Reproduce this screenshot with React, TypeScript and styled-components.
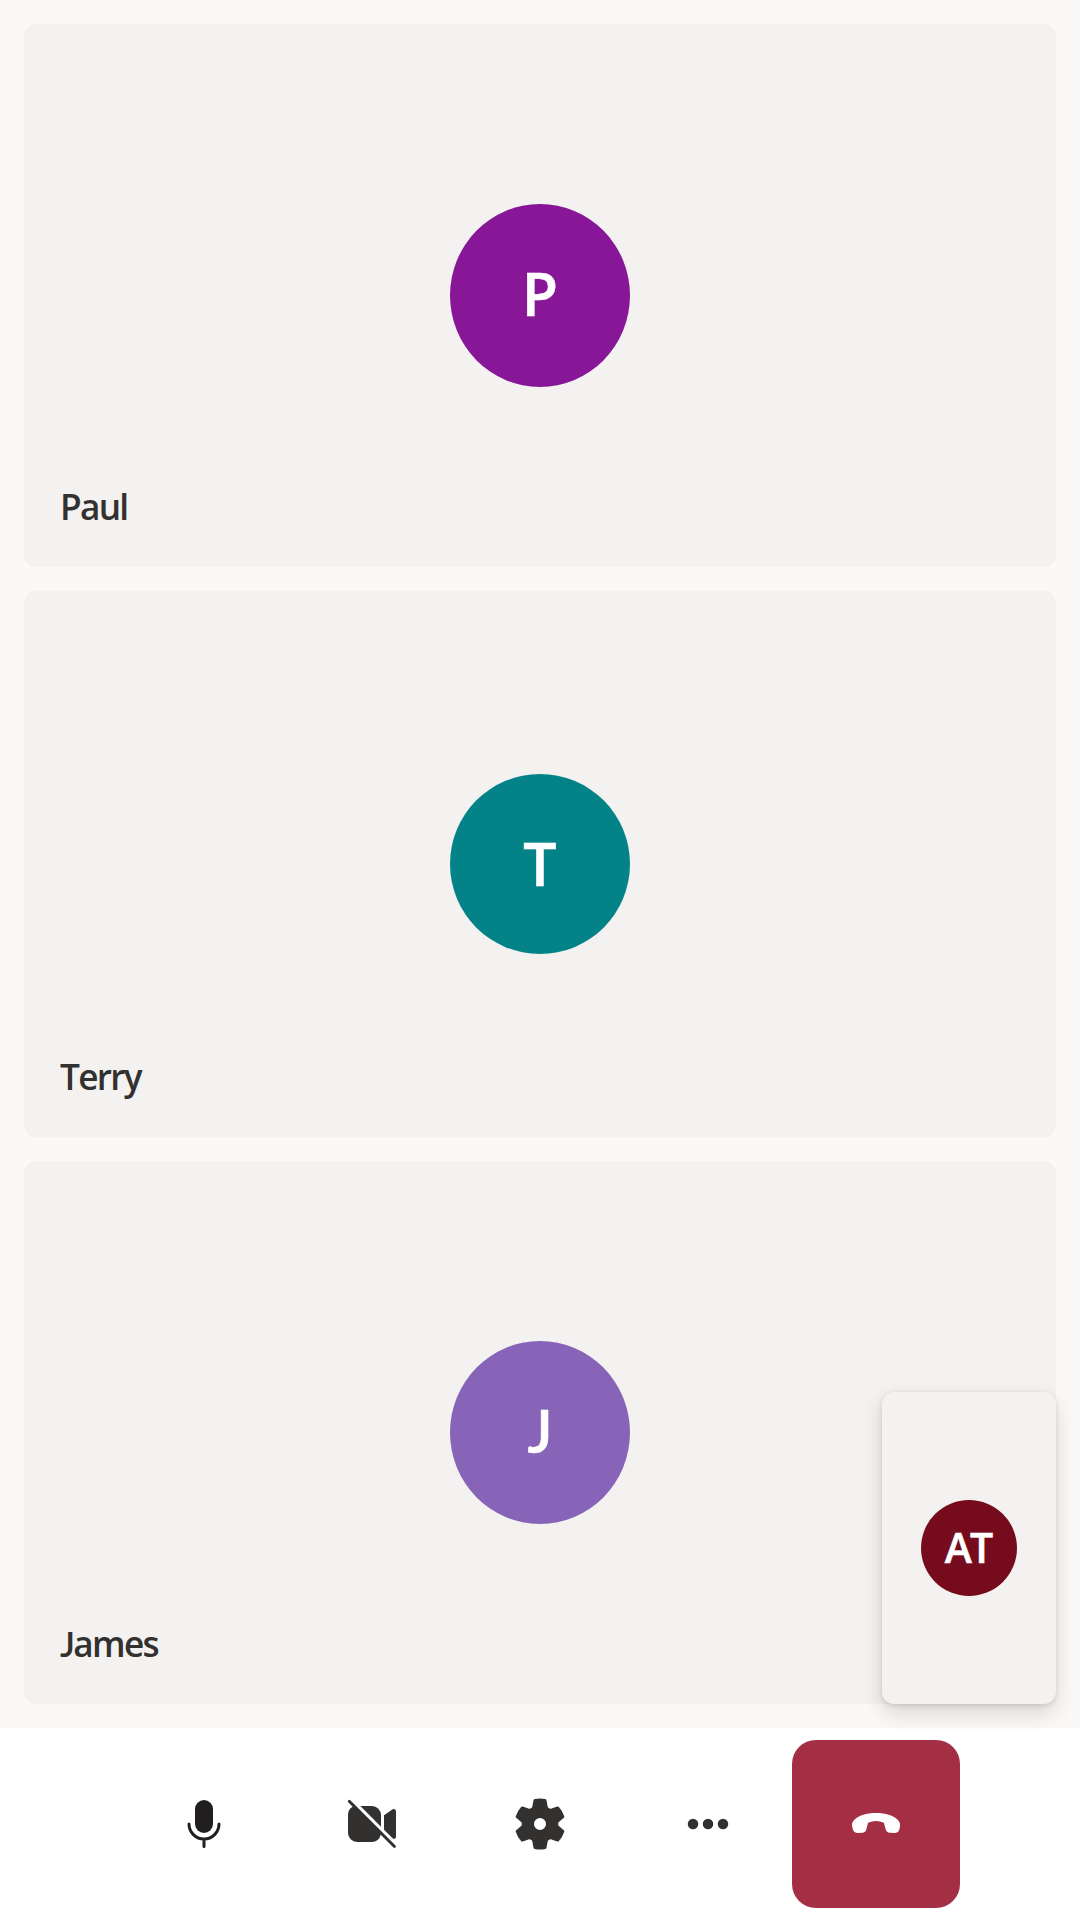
import React from "react";
import styled, { createGlobalStyle } from "styled-components";

const GlobalStyle = createGlobalStyle`
  * { box-sizing: border-box; }
  body {
    margin: 0;
    background: #fff;
    font-family: "Segoe UI", "Open Sans", "Noto Sans", sans-serif;
    font-weight: 600;
    color: #323130;
  }
`;

const Screen = styled.div`
  display: flex;
  flex-direction: column;
  width: 1080px;
  height: 1920px;
  background: #fff;
`;

const Gallery = styled.main`
  position: relative;
  display: grid;
  grid-template-rows: 543px 546px 543px;
  gap: 24px;
  height: 1728px;
  padding: 24px;
  background: #faf9f8;
`;

const Tile = styled.section`
  display: grid;
  grid-template: 100% / 100%;
  border-radius: 12px;
  background: #f3f2f1;
`;

const Avatar = styled.div<{ $color: string; $height: number }>`
  grid-area: 1 / 1;
  place-self: center;
  display: flex;
  align-items: center;
  justify-content: center;
  width: 180px;
  height: ${(p) => p.$height}px;
  border-radius: 50%;
  background: ${(p) => p.$color};
  color: #fff;
`;

/* Lato's capital J sits on the baseline instead of dropping below it. */
const HOOK_FONT = '"Segoe UI", Lato, sans-serif';

const Initial = styled.span<{ $size: number; $hook?: boolean; $tracking?: number; $lift?: number }>`
  font-size: ${(p) => p.$size}px;
  line-height: 1;
  letter-spacing: ${(p) => p.$tracking ?? 0}px;
  padding-bottom: ${(p) => p.$lift ?? 0}px;
  -webkit-text-stroke: 0.5px currentColor;
  ${(p) => p.$hook && `font-family: ${HOOK_FONT};`}
`;

const Name = styled.span<{ $hook?: boolean }>`
  grid-area: 1 / 1;
  place-self: end start;
  padding: 0 0 37.5px 36px;
  font-size: 35.2px;
  line-height: 48px;
  letter-spacing: -1.7px;
  ${(p) => p.$hook && `&::first-letter { font-family: ${HOOK_FONT}; }`}
`;

const SelfView = styled.aside`
  position: absolute;
  right: 24px;
  bottom: 24px;
  display: flex;
  align-items: center;
  justify-content: center;
  width: 174px;
  height: 312px;
  border-radius: 12px;
  background: #f3f2f1;
  box-shadow: 0 9.6px 21.6px rgba(0, 0, 0, 0.132), 0 1.8px 5.4px rgba(0, 0, 0, 0.108);
`;

const SelfAvatar = styled.div`
  display: flex;
  align-items: center;
  justify-content: center;
  width: 96px;
  height: 96px;
  padding-right: 2px;
  border-radius: 50%;
  background: #750b1c;
  color: #fff;
`;

const ControlBar = styled.footer`
  display: flex;
  height: 192px;
  padding: 12px 120px;
`;

const ControlButton = styled.button<{ $danger?: boolean }>`
  display: flex;
  align-items: center;
  justify-content: center;
  width: 168px;
  height: 168px;
  padding: 0;
  border: 0;
  border-radius: 24px;
  background: ${(p) => (p.$danger ? "#a42e43" : "transparent")};
  color: ${(p) => (p.$danger ? "#fff" : "#323130")};
`;

const Icon = styled.svg.attrs({ viewBox: "0 0 20 20", fill: "currentColor" })`
  width: 60px;
  height: 60px;
`;

const people = [
  { name: "Paul", color: "#881798", height: 183, lift: 5, hook: false },
  { name: "Terry", color: "#038387", height: 180, lift: 2, hook: false },
  { name: "James", color: "#8764b8", height: 183, lift: 4, hook: true },
];

export default function App() {
  return (
    <Screen>
      <GlobalStyle />
      <Gallery>
        {people.map((p) => (
          <Tile key={p.name}>
            <Avatar $color={p.color} $height={p.height}>
              <Initial $size={59} $hook={p.hook} $lift={p.lift}>{p.name[0]}</Initial>
            </Avatar>
            <Name $hook={p.hook}>{p.name}</Name>
          </Tile>
        ))}
        <SelfView>
          <SelfAvatar>
            <Initial $size={41} $tracking={-2} $lift={1}>AT</Initial>
          </SelfAvatar>
        </SelfView>
      </Gallery>
      <ControlBar>
        <ControlButton aria-label="Mute">
          <Icon color="#201f1e">
            <rect x="7" y="2" width="6" height="11" rx="3" />
            <path d="M5 10a5 5 0 0 0 10 0M10 15v2.5" fill="none" stroke="currentColor" strokeLinecap="round" />
          </Icon>
        </ControlButton>
        <ControlButton aria-label="Turn camera on">
          <Icon>
            <path d="M2.85 2.15a.5.5 0 1 0-.7.7l1.4 1.4A3 3 0 0 0 2 7v6a3 3 0 0 0 3 3h5a3 3 0 0 0 2.91-2.38l4.24 4.23a.5.5 0 0 0 .7-.7l-15-15Z" />
            <path d="M6.12 4 13 10.88V7a3 3 0 0 0-3-3H6.12Z" />
            <path d="M14 11.88l2.97 2.97A.75.75 0 0 0 18 14.3V5.75a.75.75 0 0 0-1.23-.58L14 7.1v4.78Z" />
          </Icon>
        </ControlButton>
        <ControlButton aria-label="Devices">
          <Icon>
            <path d="M1.91 7.38A8.5 8.5 0 0 1 3.69 4.3a.5.5 0 0 1 .54-.13l1.92.68a1 1 0 0 0 1.32-.76l.36-2a.5.5 0 0 1 .4-.4 8.53 8.53 0 0 1 3.55 0c.2.04.35.2.38.4l.37 2a1 1 0 0 0 1.32.76l1.92-.68a.5.5 0 0 1 .54.13 8.5 8.5 0 0 1 1.78 3.08c.06.2 0 .4-.15.54l-1.56 1.32a1 1 0 0 0 0 1.52l1.56 1.32a.5.5 0 0 1 .15.54 8.5 8.5 0 0 1-1.78 3.08.5.5 0 0 1-.54.13l-1.92-.68a1 1 0 0 0-1.32.76l-.37 2a.5.5 0 0 1-.38.4 8.53 8.53 0 0 1-3.56 0 .5.5 0 0 1-.39-.4l-.36-2a1 1 0 0 0-1.32-.76l-1.92.68a.5.5 0 0 1-.54-.13 8.5 8.5 0 0 1-1.78-3.08.5.5 0 0 1 .15-.54l1.56-1.32a1 1 0 0 0 0-1.52L2.06 7.92a.5.5 0 0 1-.15-.54ZM8 10a2 2 0 1 0 4 0 2 2 0 0 0-4 0Z" />
          </Icon>
        </ControlButton>
        <ControlButton aria-label="More">
          <Icon>
            <circle cx="5" cy="10" r="1.75" />
            <circle cx="10" cy="10" r="1.75" />
            <circle cx="15" cy="10" r="1.75" />
          </Icon>
        </ControlButton>
        <ControlButton $danger aria-label="Leave">
          <Icon>
            <path d="M17.96 10.94l-.16.83c-.15.78-.73 1.28-1.56 1.2l-1.63-.06c-.72-.05-1.2-.44-1.4-1.18-.3-1.1-.56-2.12-.56-2.12a6.63 6.63 0 0 0-5.3 0s-.26 1.02-.5 1.97c-.2.8-.5 1.26-1.21 1.33l-1.63.1c-.83.07-1.5-.43-1.72-1.2l-.21-.87c-.2-.85-.06-1.6.57-2.22C4.1 7.19 7 6.34 10 6.34s5.94.85 7.37 2.38c.6.65.76 1.37.59 2.22Z" />
          </Icon>
        </ControlButton>
      </ControlBar>
    </Screen>
  );
}
